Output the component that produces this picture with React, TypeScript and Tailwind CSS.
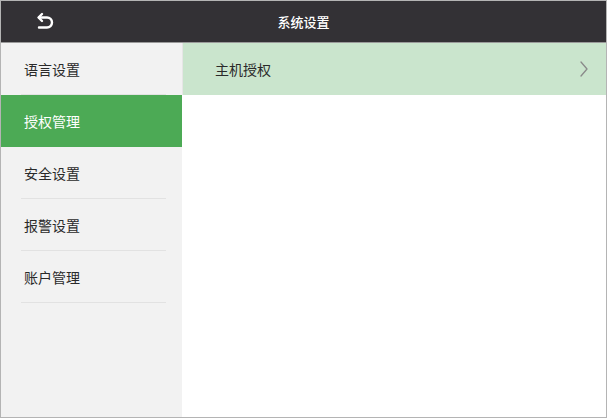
const items = ['语言设置', '授权管理', '安全设置', '报警设置', '账户管理']

function BackIcon() {
  return (
    <svg width="18" height="20" viewBox="0 0 18 20" fill="none" stroke="currentColor" strokeWidth="2.4" strokeLinecap="round" strokeLinejoin="round">
      <path d="M6 2 L2.5 5.5 L6 9" />
      <path d="M3 5.5 H11 A5 5 0 0 1 11 15.5 H3" />
    </svg>
  )
}

function Chevron() {
  return (
    <svg width="10" height="18" viewBox="0 0 10 18" fill="none" stroke="#8a8a8a" strokeWidth="1.3" strokeLinecap="round" strokeLinejoin="round">
      <path d="M2 2 L8 9 L2 16" />
    </svg>
  )
}

export default function App() {
  const active = 1
  return (
    <div
      className="flex h-[418px] w-[607px] flex-col overflow-hidden border border-[#b4b4b4] bg-white"
      style={{ fontFamily: '"Noto Sans CJK SC", "Noto Sans", sans-serif' }}
    >
      <header className="relative flex h-[42px] shrink-0 items-center justify-center border-b border-[#9a9a9a] bg-[#333135]">
        <button type="button" className="absolute left-[35px] top-[11px] text-white">
          <BackIcon />
        </button>
        <h1 className="text-[13px] font-medium text-white">系统设置</h1>
      </header>

      <div className="flex min-h-0 flex-1">
        <aside className="w-[181px] shrink-0 bg-[#f2f2f2]">
          {items.map((label, i) => (
            <div
              key={label}
              className={
                i === active
                  ? 'flex h-[52px] items-center bg-[#4caa55] pl-[23px] text-[14px] text-white'
                  : 'relative flex h-[52px] items-center pl-[23px] text-[14px] text-[#2a2a2a]'
              }
            >
              {label}
              {i !== active && (
                <div className="absolute bottom-0 left-[20px] right-[16px] h-px bg-[#e2e2e2]" />
              )}
            </div>
          ))}
        </aside>

        <main className="flex-1">
          <div className="flex h-[52px] items-center justify-between border-l border-[#e6e6e6] bg-[#cae5cd] pl-[32px] pr-[17px] text-[14px] text-[#2a2a2a]">
            <span>主机授权</span>
            <Chevron />
          </div>
        </main>
      </div>
    </div>
  )
}
